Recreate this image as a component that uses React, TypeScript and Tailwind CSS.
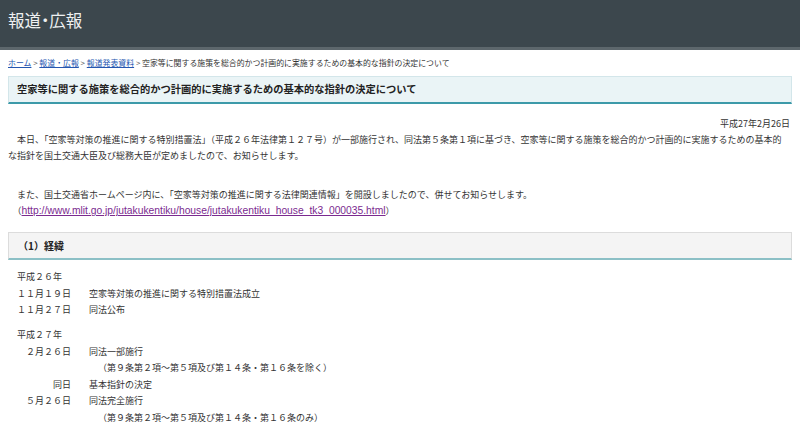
const JP = "font-['Noto_Sans_CJK_JP','Noto_Sans',sans-serif]";
const SP = "\u3000";

function Header() {
  return (
    <header className="h-[50px] bg-[#3c474d] border-b-[3px] border-[#5d676c] flex items-center px-2 pb-[6px]">
      <h1 className="text-[16.5px] leading-none text-[#eef0f1] [font-feature-settings:'palt']">
        報道・広報
      </h1>
    </header>
  );
}

function Breadcrumb() {
  const links = ["ホーム", "報道・広報", "報道発表資料"];
  return (
    <nav className="mt-[7px] px-2 text-[7.9px] leading-[12px] text-[#333] whitespace-nowrap">
      {links.map((l) => (
        <span key={l}>
          <a className="text-[#2456b0] underline" href="#">
            {l}
          </a>
          <span className="text-[#555]"> &gt; </span>
        </span>
      ))}
      <span>空家等に関する施策を総合的かつ計画的に実施するための基本的な指針の決定について</span>
    </nav>
  );
}

function Row({ date, children, sub }: { date: string; children: string; sub?: string }) {
  return (
    <div>
      <div className="flex">
        <div className="w-[54px] text-right shrink-0">{date}</div>
        <div className="ml-[18px]">{children}</div>
      </div>
      {sub && <div className="ml-[81px]">{sub}</div>}
    </div>
  );
}

export default function App() {
  return (
    <div className={`${JP} bg-white min-h-[423px] w-[800px] text-[#333]`}>
      <Header />
      <Breadcrumb />

      <div className="mx-2 mt-[7px] h-[28px] bg-[#eaf4f6] border border-[#d3e6ea] border-b-2 border-b-[#3d9aa9] flex items-center px-2">
        <h2 className="text-[10.25px] font-bold text-[#222] leading-none">
          空家等に関する施策を総合的かつ計画的に実施するための基本的な指針の決定について
        </h2>
      </div>

      <div className="mx-2 text-[9px] leading-[16px]">
        <p className="mt-[12px] text-right pr-[2px]">平成27年2月26日</p>

        <p className="mt-0 pr-[10px]">
          {SP}本日、「空家等対策の推進に関する特別措置法」（平成２６年法律第１２７号）が一部施行され、同法第５条第１項に基づき、空家等に関する施策を総合的かつ計画的に実施するための基本的な指針を国土交通大臣及び総務大臣が定めましたので、お知らせします。
        </p>

        <p className="mt-[23px]">
          {SP}また、国土交通省ホームページ内に、「空家等対策の推進に関する法律関連情報」を開設しましたので、併せてお知らせします。
          <br />
          {SP}（
          <a className="font-['Liberation_Sans',sans-serif] text-[10.3px] text-[#7b2a8f] underline" href="#">
            http://www.mlit.go.jp/jutakukentiku/house/jutakukentiku_house_tk3_000035.html
          </a>
          ）
        </p>
      </div>

      <div className="mx-2 mt-[13px] h-[28px] bg-[#f4f4f4] border border-[#dcdcdc] border-b-2 border-b-[#8cc0c6] flex items-center px-[9px]">
        <h3 className="text-[10px] font-bold text-[#222] leading-none">（1）経緯</h3>
      </div>

      <div className="pl-[17px] mt-[9px] text-[9px] leading-[16.5px]">
        <div>平成２６年</div>
        <Row date="１１月１９日">空家等対策の推進に関する特別措置法成立</Row>
        <Row date="１１月２７日">同法公布</Row>
        <div className="mt-[8.5px]">平成２７年</div>
        <Row date="２月２６日" sub="（第９条第２項～第５項及び第１４条・第１６条を除く）">
          同法一部施行
        </Row>
        <Row date="同日">基本指針の決定</Row>
        <Row date="５月２６日" sub="（第９条第２項～第５項及び第１４条・第１６条のみ）">
          同法完全施行
        </Row>
      </div>
    </div>
  );
}
